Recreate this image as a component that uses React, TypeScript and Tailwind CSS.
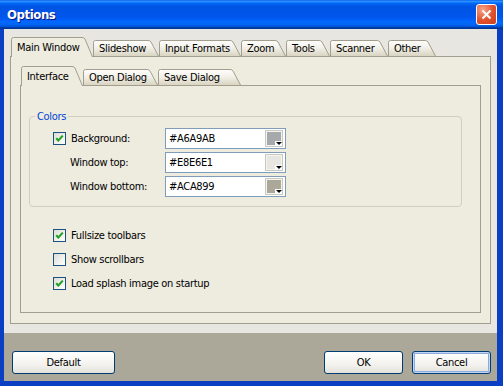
import React from "react";

type TabDef = { label: string; w: number; cls: string };

const outerTabs: TabDef[] = [
  { label: "Main Window", w: 82, cls: "w-[82px]" },
  { label: "Slideshow", w: 66, cls: "w-[66px]" },
  { label: "Input Formats", w: 82, cls: "w-[82px]" },
  { label: "Zoom", w: 45, cls: "w-[45px]" },
  { label: "Tools", w: 44, cls: "w-[44px]" },
  { label: "Scanner", w: 58, cls: "w-[58px]" },
  { label: "Other", w: 48, cls: "w-[48px]" },
];

const innerTabs: TabDef[] = [
  { label: "Interface", w: 62, cls: "w-[62px]" },
  { label: "Open Dialog", w: 75, cls: "w-[75px]" },
  { label: "Save Dialog", w: 83, cls: "w-[83px]" },
];

function Tab({ tab, selected }: { tab: TabDef; selected: boolean }) {
  const H = selected ? 20 : 16;
  const W = tab.w;
  const s = 9;
  const id = "g" + tab.label.replace(/\s/g, "");
  const edge = `M0.5 ${H} L0.5 2.5 Q0.5 0.5 2.5 0.5 L${W - s - 2} 0.5 Q${W - s} 0.5 ${W - s + 1} 2 L${W - 0.5} ${H}`;
  return (
    <div
      className={`relative shrink-0 ${tab.cls} ${
        selected ? "h-[20px] z-20" : "h-[16px] mb-[1px] z-10"
      }`}
    >
      <svg className="absolute left-0 top-0" width={W} height={H}>
        <defs>
          <linearGradient id={id} x1="0" y1="0" x2="0" y2="1">
            <stop offset="0" stopColor="#FEFEFD" />
            <stop offset="0.5" stopColor="#F1EFE6" />
            <stop offset="1" stopColor="#D9D4C2" />
          </linearGradient>
        </defs>
        <path d={edge + " Z"} fill={selected ? "#EEEBDF" : `url(#${id})`} />
        <path d={edge} fill="none" stroke="#A19E8D" />
      </svg>
      <span
        className={`relative block pl-[6px] leading-[13px] whitespace-nowrap ${
          selected ? "pt-[4px]" : "pt-[2px]"
        }`}
      >
        {tab.label}
      </span>
    </div>
  );
}

function TabStrip({ tabs, active }: { tabs: TabDef[]; active: number }) {
  return (
    <div className="relative z-10 flex items-end h-[20px] -mb-[1px] pl-[1px]">
      {tabs.map((t, i) => (
        <Tab key={t.label} tab={t} selected={i === active} />
      ))}
    </div>
  );
}

function CheckBox({ checked }: { checked: boolean }) {
  return (
    <span className="w-[13px] h-[13px] shrink-0 border border-[#1C5180] bg-[linear-gradient(135deg,#DCDCD6,#FFFFFF)] flex items-center justify-center">
      {checked && (
        <svg width="11" height="11" viewBox="0 0 11 11">
          <path d="M2.2 5.2 L4.3 7.4 L8.8 2.6" stroke="#21A121" strokeWidth="2.1" fill="none" />
        </svg>
      )}
    </span>
  );
}

function ColorField({ value, swatch }: { value: string; swatch: string }) {
  return (
    <div className="w-[121px] h-[21px] border border-[#7F9DB9] bg-white flex items-center pl-[3px] pr-[3px]">
      <span className="flex-1 leading-[13px]">{value}</span>
      <div className="relative w-[16px] h-[15px] border border-[#F4F4F0] shadow-[0_0_0_1px_#C8C8C0]" style={{ backgroundColor: swatch }}>
        <div className="absolute right-[-1px] bottom-[-1px] w-[7px] h-[5px] bg-white flex items-center justify-center">
          <div className="w-0 h-0 border-l-[3px] border-r-[3px] border-t-[3px] border-l-transparent border-r-transparent border-t-black" />
        </div>
      </div>
    </div>
  );
}

function XpButton({ label, cls, focused }: { label: string; cls: string; focused?: boolean }) {
  return (
    <button
      className={`${cls} h-[23px] rounded-[3px] border border-[#003C74] bg-[linear-gradient(to_bottom,#FFFFFF,#F3F2EE_60%,#E3E1D9)] flex items-center justify-center leading-[13px] ${
        focused ? "shadow-[inset_0_0_0_1px_#C2D5F2,inset_0_0_0_2px_#8AAAE0]" : ""
      }`}
    >
      {label}
    </button>
  );
}

export default function App() {
  return (
    <div className="w-[503px] h-[386px] flex flex-col bg-[#0A3FC4] overflow-hidden font-['DejaVu_Sans_Condensed','DejaVu_Sans',sans-serif] text-[11px] tracking-[-0.3px] text-black">
      {/* Title bar */}
      <div className="h-[29px] shrink-0 flex items-center pl-[7px] pr-[6px] bg-[linear-gradient(to_bottom,#0058EE_0%,#3593FF_4%,#288EFF_6%,#127DFF_8%,#036FFC_10%,#0262EE_14%,#0057E5_20%,#0054E3_24%,#0055EB_56%,#005BF5_66%,#026AFE_76%,#0062EF_86%,#0052D6_92%,#0040AB_94%,#003092_100%)]">
        <span className="text-white font-bold text-[13px] tracking-[-0.4px] leading-[16px] [text-shadow:1px_1px_#0A1883]">
          Options
        </span>
        <div className="ml-auto w-[21px] h-[21px] rounded-[3px] border border-white bg-[radial-gradient(circle_at_30%_25%,#F5A58A,#E0512B_55%,#C9401E)] flex items-center justify-center">
          <svg width="11" height="11" viewBox="0 0 11 11">
            <path d="M1.5 1.5 L9.5 9.5 M9.5 1.5 L1.5 9.5" stroke="white" strokeWidth="2" />
          </svg>
        </div>
      </div>

      <div className="flex-1 flex flex-col ml-[4px] mr-[6px] mb-[5px]">
        {/* Upper area */}
        <div className="bg-[#E8E6E1] pt-[8px] px-[6px] pb-[9px]">
          <TabStrip tabs={outerTabs} active={0} />
          <div className="h-[268px] border border-[#A19E8D] bg-[#EEEBDF] pt-[9px] pl-[9px] pr-[9px]">
            <TabStrip tabs={innerTabs} active={0} />
            <div className="h-[228px] border border-[#A19E8D] bg-[#EEEBDF] pl-[8px]">
              <fieldset className="mt-[24px] w-[433px] border border-[#D0D0BF] rounded-[4px] pt-[5px] pb-[9px]">
                <legend className="ml-[5px] px-[2px] leading-[13px] text-[#0046D5]">Colors</legend>
                <div className="flex flex-col gap-[3px] pl-[23px]">
                  <div className="flex items-center h-[21px]">
                    <div className="w-[112px] flex items-center gap-[5px]">
                      <CheckBox checked />
                      <span className="leading-[13px]">Background:</span>
                    </div>
                    <ColorField value="#A6A9AB" swatch="#A6A9AB" />
                  </div>
                  <div className="flex items-center h-[21px]">
                    <div className="w-[112px] pl-[17px] leading-[13px]">Window top:</div>
                    <ColorField value="#E8E6E1" swatch="#E8E6E1" />
                  </div>
                  <div className="flex items-center h-[21px]">
                    <div className="w-[112px] pl-[17px] leading-[13px]">Window bottom:</div>
                    <ColorField value="#ACA899" swatch="#ACA899" />
                  </div>
                </div>
              </fieldset>

              <div className="mt-[16px] pl-[24px] flex flex-col">
                {[
                  ["Fullsize toolbars", true],
                  ["Show scrollbars", false],
                  ["Load splash image on startup", true],
                ].map(([label, checked]) => (
                  <div key={label as string} className="h-[24px] flex items-center gap-[5px]">
                    <CheckBox checked={checked as boolean} />
                    <span className="leading-[13px]">{label as string}</span>
                  </div>
                ))}
              </div>
            </div>
          </div>
        </div>

        {/* Button bar */}
        <div className="flex-1 bg-[#ACA899] flex items-start pt-[18px] pl-[8px] pr-[6px]">
          <XpButton label="Default" cls="w-[103px]" />
          <div className="flex-1" />
          <XpButton label="OK" cls="w-[79px]" />
          <div className="w-[9px]" />
          <XpButton label="Cancel" cls="w-[79px]" focused />
        </div>
      </div>
    </div>
  );
}
